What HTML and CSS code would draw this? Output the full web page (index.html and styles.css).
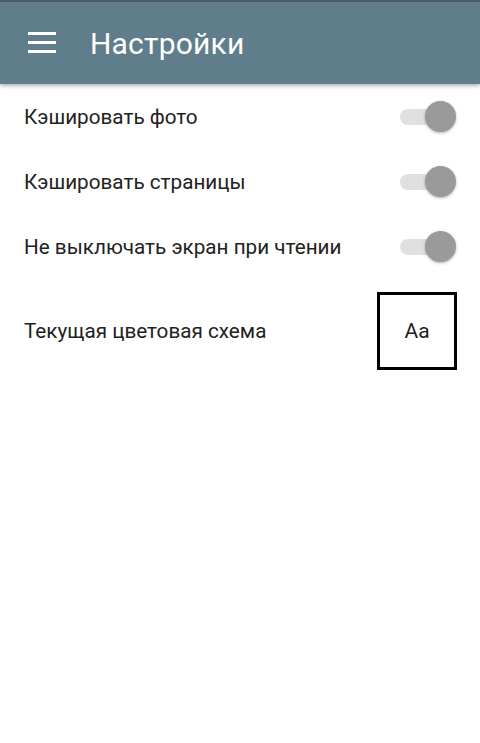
FILE: index.html
```html
<!DOCTYPE html>
<html lang="ru">
<head>
<meta charset="utf-8">
<link rel="stylesheet" href="styles.css">
</head>
<body>
<div class="statusbar"></div>
<header class="toolbar">
  <svg class="menu" width="28" height="22" viewBox="0 0 28 22">
    <rect x="0" y="1" width="28" height="3" fill="#fff"/>
    <rect x="0" y="10" width="28" height="3" fill="#fff"/>
    <rect x="0" y="19" width="28" height="3" fill="#fff"/>
  </svg>
  <h1 class="title">Настройки</h1>
</header>
<main class="list">
  <div class="row">
    <span class="label">Кэшировать фото</span>
    <span class="switch"><span class="track"></span><span class="thumb"></span></span>
  </div>
  <div class="row">
    <span class="label">Кэшировать страницы</span>
    <span class="switch"><span class="track"></span><span class="thumb"></span></span>
  </div>
  <div class="row">
    <span class="label">Не выключать экран при чтении</span>
    <span class="switch"><span class="track"></span><span class="thumb"></span></span>
  </div>
  <div class="row scheme">
    <span class="label">Текущая цветовая схема</span>
    <span class="swatch">Aa</span>
  </div>
</main>
</body>
</html>
```
FILE: styles.css
```css
html, body {
  margin: 0;
  padding: 0;
  background: #fff;
  font-family: Roboto, "Noto Sans", sans-serif;
}
.statusbar {
  height: 2px;
  background: #4b5d67;
}
.toolbar {
  height: 82px;
  background: #607d8b;
  display: flex;
  align-items: center;
  box-shadow: 0 2px 4px rgba(0,0,0,0.3);
  position: relative;
}
.menu {
  margin-left: 28px;
  margin-top: -2px;
}
.title {
  margin: 0 0 0 34px;
  font-weight: 400;
  font-size: 30px;
  color: #fff;
  letter-spacing: 0.2px;
}
.list {
  display: flex;
  flex-direction: column;
}
.row {
  height: 65px;
  display: flex;
  align-items: center;
  justify-content: space-between;
  padding: 0 24px;
}
.label {
  font-size: 20.7px;
  color: #222;
}
.switch {
  position: relative;
  width: 56px;
  height: 32px;
  display: block;
}
.track {
  position: absolute;
  left: 0;
  top: 8px;
  width: 50px;
  height: 16px;
  border-radius: 8px;
  background: #e0e0e0;
}
.thumb {
  position: absolute;
  right: 0;
  top: 0;
  width: 31px;
  height: 31px;
  border-radius: 50%;
  background: #9a9a9a;
  box-shadow: 0 1px 3px rgba(0,0,0,0.3);
}
.scheme {
  height: 103px;
}
.swatch {
  width: 74px;
  height: 72px;
  border: 3px solid #000;
  display: flex;
  align-items: center;
  justify-content: center;
  font-size: 21px;
  color: #222;
  margin-right: -1px;
}
```
